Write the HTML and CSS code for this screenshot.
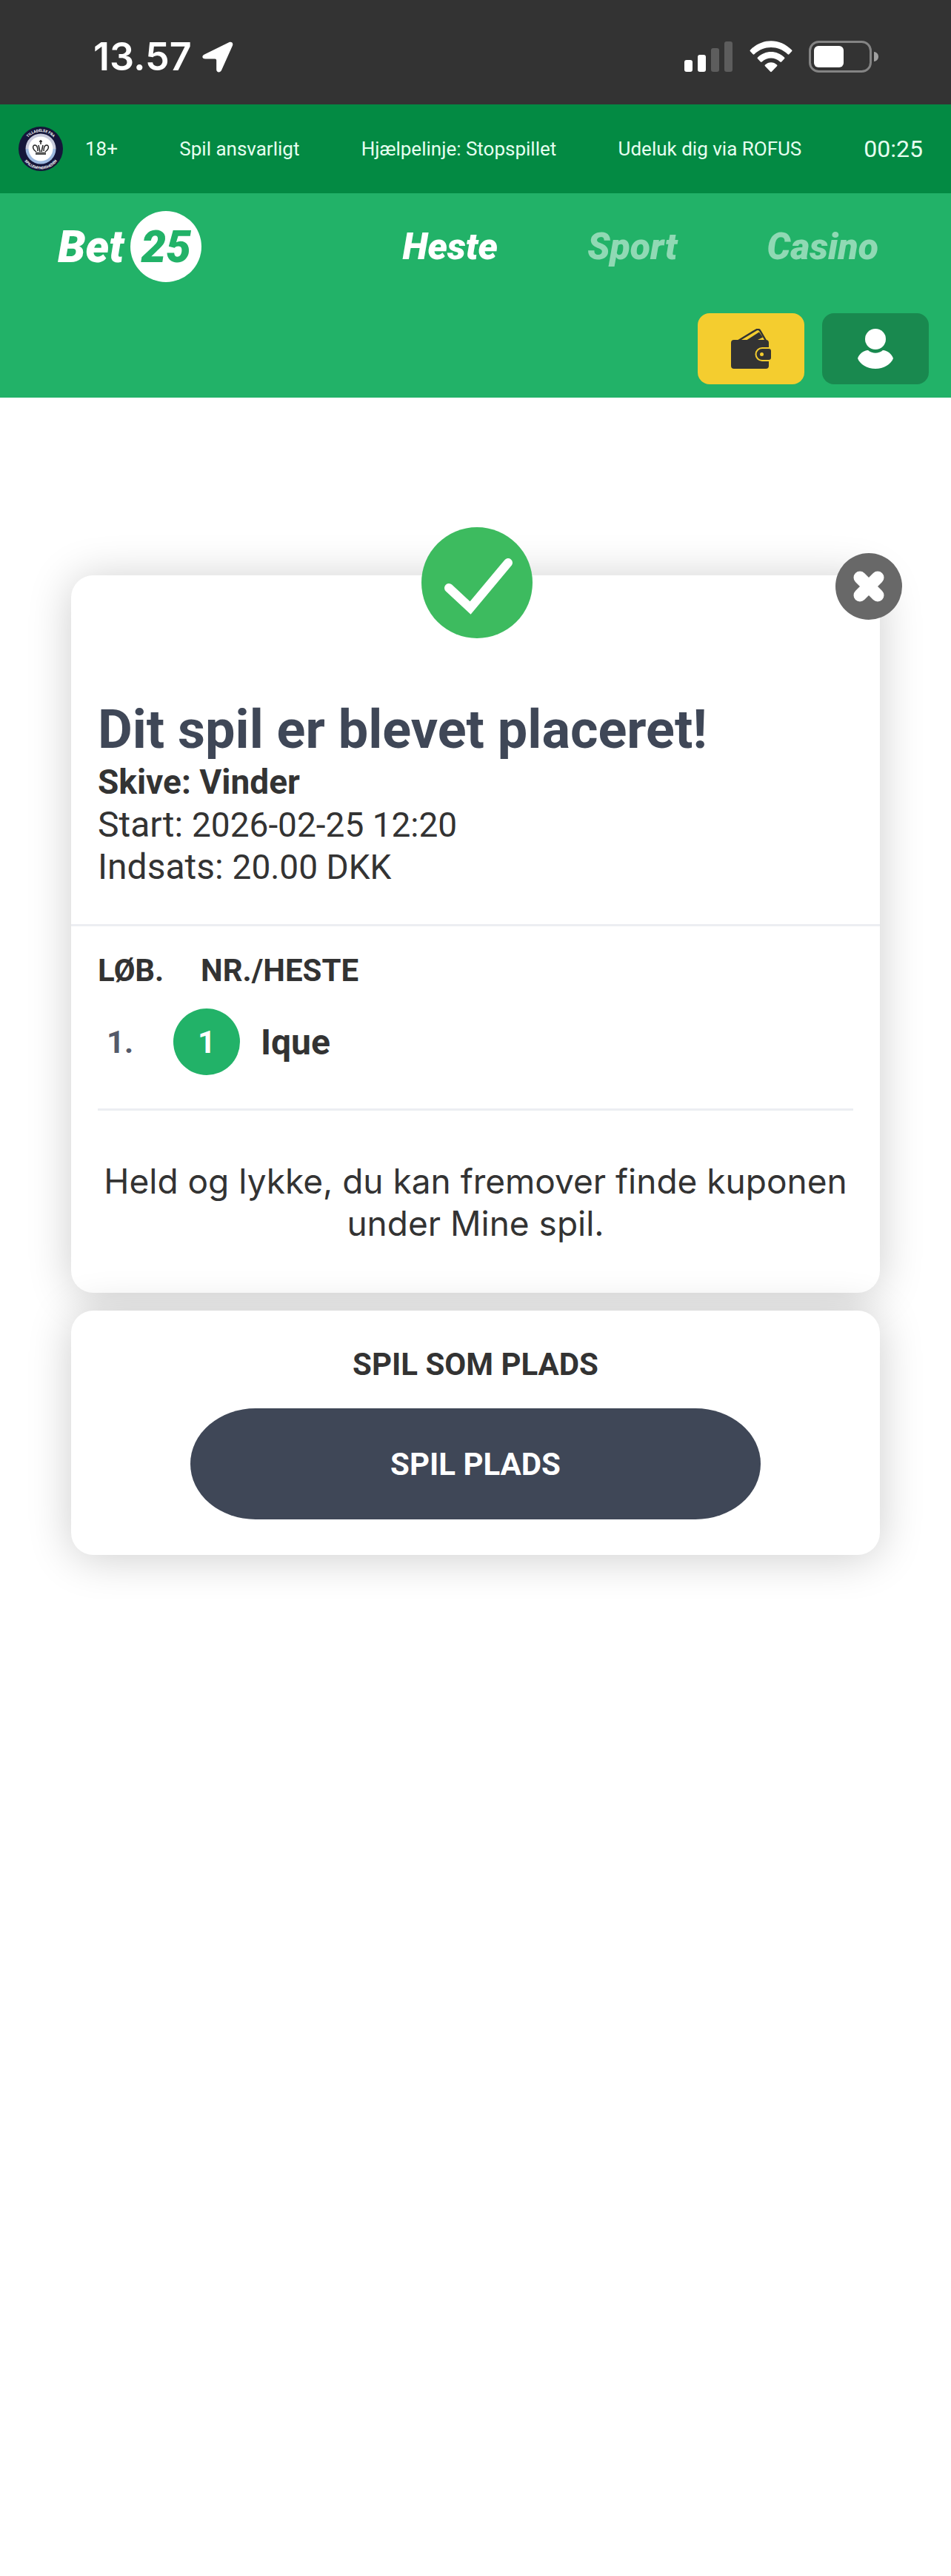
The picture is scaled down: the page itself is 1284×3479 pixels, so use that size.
FILE: index.html
```html
<!DOCTYPE html>
<html lang="da">
<head>
	<meta charset="UTF-8">
	<meta name="viewport" content="width=device-width, initial-scale=1">
	<title>Bet25 - Kvittering</title>
	<link rel="stylesheet" href="styles.css">
</head>
<body>
	<div class="status">
		<span class="clock">13.57</span>
		<svg class="location" width="42" height="42" viewBox="0 0 42 42"><path d="M3 17.5 36 1.300C39.500-.3 42.200 2 41 5.500L26 39c-1.700 3.600-6.800 3-6.800-1V25.500c0-1.200-.8-2-2-2H4.500C-.5 23.500-1 19.500 3 17.500z" fill="#fff"/></svg>
		<div class="signals">
			<svg width="66" height="44" viewBox="0 0 66 44"><g fill="#fff"><rect y="26" width="11" height="16" rx="3"/><rect x="18" y="19" width="11" height="23" rx="3"/></g><g fill="#5d5d5d"><rect x="36" y="10" width="11" height="32" rx="3"/><rect x="54" y="1" width="11" height="41" rx="3"/></g></svg>
			<svg width="58" height="44" viewBox="0 0 58 44" fill="#fff"><path d="M1 12.500C17-4 41-4 57 12.500c.6.6.6 1.200.1 1.800l-3.700 4c-.6.600-1.200.6-1.800 0C38.500 6 19.500 6 6.400 18.300c-.6.6-1.200.6-1.800 0l-3.700-4c-.5-.6-.5-1.200.1-1.800z"/><path d="M11 22.500c10-10 26-10 36 0 .6.600.6 1.200.1 1.800l-4 4.100c-.6.600-1.200.600-1.800 0-7.200-6.500-17.400-6.500-24.600 0-.6.6-1.200.6-1.800 0l-4-4.100c-.5-.6-.5-1.200.1-1.800z"/><path d="M21 32.500c4.500-4.500 11.500-4.500 16 0 .6.6.6 1.200.1 1.800l-7.200 7.500c-.6.6-1.200.6-1.800 0l-7.200-7.500c-.5-.6-.5-1.200.1-1.800z"/></svg>
			<svg width="95" height="44" viewBox="0 0 95 44"><rect x="1.500" y="1.500" width="82" height="40" rx="12" fill="none" stroke="#848484" stroke-width="3"/><rect x="7" y="7" width="40" height="29" rx="6" fill="#fff"/><path d="M88 15c8 1 8 12 0 13z" fill="#a0a0a0"/></svg>
		</div>
	</div>

	<div class="legal">
		<svg class="seal" width="60" height="60" viewBox="0 0 60 60">
			<circle cx="30" cy="30" r="30" fill="#15163a"/>
			<path d="M9.500 30a20.500 20.500 0 0 1 41 0z" fill="#c9cbdc"/>
			<path d="M9.500 30a20.500 20.500 0 0 0 41 0z" fill="#9db9e0"/>
			<circle cx="30" cy="30" r="16.500" fill="#fff"/>
			<g fill="none" stroke="#222" stroke-width="1.500"><path d="M30 18v6M28 20h4M24 34c-6-4-5-9-2-9 3 0 4 4 4 8M36 34c6-4 5-9 2-9-3 0-4 4-4 8M29 34l-2-9M31 34l2-9"/></g>
			<path d="M23 34.500h14V38H23z" fill="#555"/>
			<path id="ring-top" d="M7 30a23 23 0 0 1 46 0" fill="none"/>
			<path id="ring-bottom" d="M2.500 30a27.500 27.500 0 0 0 55 0" fill="none"/>
			<text class="seal-text"><textPath href="#ring-top" startOffset="50%" text-anchor="middle">TILLADELSE FRA</textPath></text>
			<text class="seal-text"><textPath href="#ring-bottom" startOffset="50%" text-anchor="middle">SPILLEMYNDIGHEDEN</textPath></text>
		</svg>
		<ul>
			<li><a href="#">18+</a></li>
			<li><a href="#">Spil ansvarligt</a></li>
			<li><a href="#">Hjælpelinje: Stopspillet</a></li>
			<li><a href="#">Udeluk dig via ROFUS</a></li>
		</ul>
		<span class="session">00:25</span>
	</div>

	<header class="header">
		<div class="header-top">
			<a href="#" class="logo">Bet <span>25</span></a>
			<nav>
				<a href="#" class="active">Heste</a>
				<a href="#">Sport</a>
				<a href="#">Casino</a>
			</nav>
		</div>
		<div class="header-buttons">
			<button type="button" class="wallet" aria-label="Indbetal">
				<svg width="54" height="54" viewBox="0 0 54 54"><path d="M10 16 34 1.500c2.500-1.300 4.500-.5 5.500 1.500l7.500 13" fill="none" stroke="#333" stroke-width="2.500"/><path d="m20 16 18-11.500 5 7L34 16z" fill="#333"/><path d="M4 15h43q4 0 4 4v6H42a9.500 9.500 0 0 0 0 19h9v6q0 4-4 4H4q-4 0-4-4V19q0-4 4-4z" fill="#333"/><path d="M42 27h9q3 0 3 3v9q0 3-3 3h-9a7.500 7.500 0 0 1 0-15z" fill="#333"/><circle cx="41.500" cy="34.500" r="2.500" fill="#f4cd2f"/></svg>
			</button>
			<button type="button" class="profile" aria-label="Profil">
				<svg width="48" height="54" viewBox="0 0 48 54" fill="#fff"><ellipse cx="24" cy="14" rx="14" ry="14"/><path d="M14 29c6 5 14 5 20 0 6 0 12 5 14 11-3 8-13 14-24 14S3 48 0 40c2-6 8-11 14-11z"/></svg>
			</button>
		</div>
	</header>

	<main>
		<section class="card receipt">
			<svg class="check" width="150" height="150" viewBox="0 0 150 150"><circle cx="75" cy="75" r="75" fill="#3dbb5f"/><path d="m37 82 29 27 51-61" fill="none" stroke="#fff" stroke-width="12" stroke-linecap="round"/></svg>
			<button type="button" class="close" aria-label="Luk"><svg width="42" height="42" viewBox="0 0 42 42"><path d="m9 9 24 24M33 9 9 33" stroke="#fff" stroke-width="17" stroke-linecap="round"/></svg></button>
			<div class="summary">
				<h1>Dit spil er blevet placeret!</h1>
				<h2>Skive: Vinder</h2>
				<p>Start: <span>2026-02-25 12:20</span></p>
				<p>Indsats: <span>20.00 DKK</span></p>
			</div>
			<div class="details">
				<table>
					<thead>
						<tr><th class="race">LØB.</th><th class="horse-head">NR./HESTE</th></tr>
					</thead>
					<tbody>
						<tr>
							<td class="race">1.</td>
							<td><div class="horse"><span class="number">1</span><b>Ique</b></div></td>
						</tr>
					</tbody>
				</table>
			</div>
			<p class="message">Held og lykke, du kan fremover finde kuponen under Mine spil.</p>
		</section>

		<section class="card place">
			<h3>SPIL SOM PLADS</h3>
			<button type="button" class="place-button">SPIL PLADS</button>
		</section>
	</main>
</body>
</html>
```

FILE: styles.css
```css
*{box-sizing:border-box;}
body{margin:0;background:#fff;color:#333;font-family:Roboto,"Liberation Sans",sans-serif;font-size:48px;line-height:57px;}
h1,h2,h3,p,ul{margin:0;padding:0;}
a{color:inherit;text-decoration:none;}
button{border:0;padding:0;font-family:inherit;cursor:pointer;}
svg{display:block;}

/* status bar */
.status{display:flex;align-items:center;height:141px;padding:12px 97px 0 126px;background:#333;color:#fff;}
.clock{font-family:Inter,sans-serif;font-size:52px;font-weight:600;}
.location{margin-left:14px;}
.signals{display:flex;gap:22px;margin-left:auto;}

/* legal bar */
.legal{display:flex;align-items:center;height:120px;padding:0 38px 0 25px;background:#038a43;color:#e6fff0;font-size:26px;}
.legal ul{flex:1;display:flex;justify-content:space-between;margin:0 84px 0 30px;list-style:none;white-space:nowrap;}
.seal-text{font-family:Roboto,sans-serif;font-size:5px;font-weight:700;fill:#fff;}
.session{font-size:32px;}

/* header */
.header{padding:24px 30px 18px;background:#22b268;color:#fff;}
.header-top{display:flex;justify-content:space-between;align-items:center;padding:0 68px 0 48px;}
.logo{display:flex;align-items:center;gap:9px;font-size:60px;font-weight:900;font-style:italic;}
.logo span{display:flex;align-items:center;justify-content:center;width:96px;height:96px;border-radius:50%;background:#fff;color:#22b268;}
.header nav{display:flex;justify-content:space-between;width:58%;font-size:50px;font-weight:900;font-style:italic;}
.header nav a{color:#90d9b4;}
.header nav .active{color:#fff;}
.header-buttons{display:flex;justify-content:flex-end;gap:24px;margin-top:42px;}
.header-buttons button{display:flex;align-items:center;justify-content:center;width:144px;height:96px;border-radius:16px;}
.wallet{background:#f4cd2f;}
.profile{background:#19894f;}

/* cards */
main{padding:240px 96px 60px;}
.card{position:relative;border-radius:30px;background:#fff;box-shadow:0 4px 60px rgba(0,0,0,.2);}
.check{position:absolute;top:-65px;left:calc(50% - 73px);}
.close{position:absolute;top:-30px;right:-30px;display:flex;align-items:center;justify-content:center;width:90px;height:90px;border-radius:50%;background:#686868;}
.summary{padding:167px 36px 49px;border-bottom:3px solid #eceef2;}
.summary h1{font-size:72px;line-height:84px;color:#3f4757;}
.summary h2{font-size:46px;line-height:57px;}
.summary span{font-size:46px;line-height:46px;}
.details{margin:0 36px;padding:31px 0 45px;border-bottom:3px solid #eceef2;}
.details table{width:100%;border-collapse:collapse;table-layout:fixed;}
.details th,.details td{padding:0;text-align:left;}
.details th{font-size:42px;}
.details .race{width:102px;}
.details td{padding-top:23px;}
.details td.race{padding-left:12px;font-size:42px;font-weight:700;color:#555a6a;}
.details .horse-head{padding-left:37px;}
.horse{display:flex;align-items:center;gap:28px;}
.number{display:flex;align-items:center;justify-content:center;width:90px;height:90px;border-radius:50%;background:#22b268;color:#fff;font-size:42px;font-weight:700;}
.message{padding:67px 36px 65px;font-family:Inter,sans-serif;font-size:46px;text-align:center;}
.place{margin-top:24px;padding:44px 36px 48px;text-align:center;}
.place h3{font-size:42px;line-height:57px;}
.place-button{display:block;width:100%;max-width:770px;height:150px;margin:31px auto 0;border-radius:88px/75px;background:#3f4757;color:#fff;font-size:42px;font-weight:700;}
```
